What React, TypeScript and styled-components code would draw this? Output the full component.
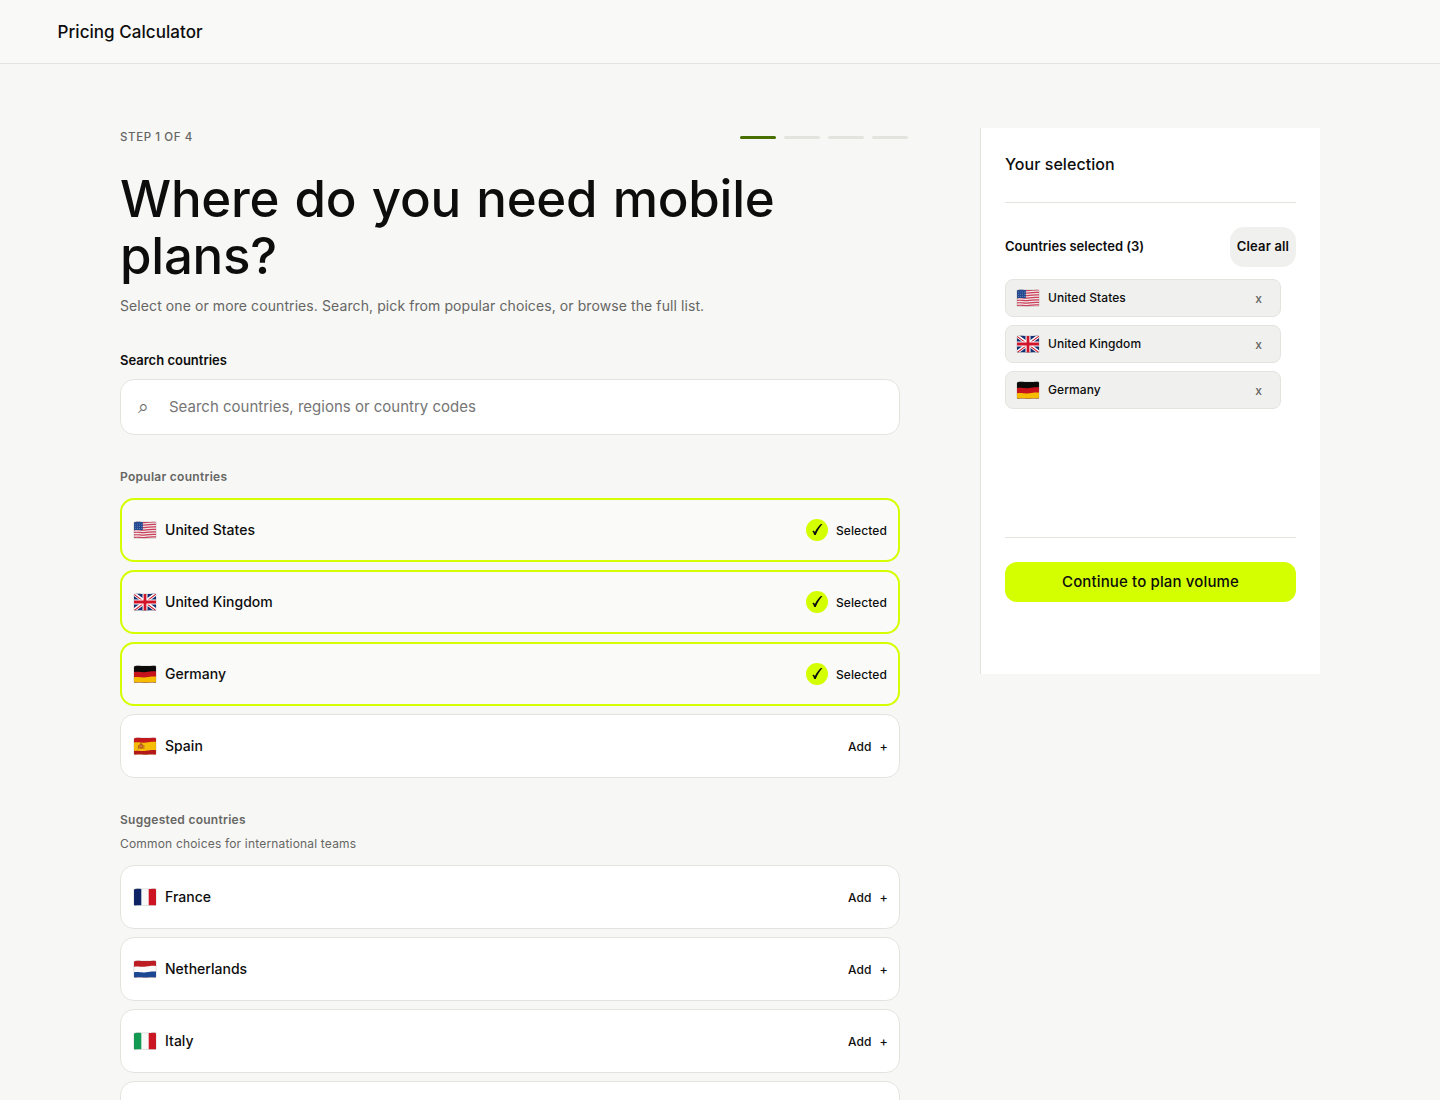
import React, { useId } from 'react';
import styled, { createGlobalStyle } from 'styled-components';

const ink = '#0d0d0d';
const muted = '#666664';
const line = '#e4e4df';
const lime = '#d4ff00';

const Global = createGlobalStyle`
  *, *::before, *::after { box-sizing: border-box; }
  html { overflow: hidden; }
  body {
    margin: 0;
    height: 1100px;
    overflow: hidden;
    background: #f7f7f5;
    color: ${ink};
    font-family: Inter, "Noto Sans", "DejaVu Sans", sans-serif;
    font-weight: 500;
  }
  h1, h2, h3, p, ul { margin: 0; padding: 0; font-weight: 500; }
  button, input { font: inherit; color: inherit; border: 0; }
`;

const Header = styled.header`
  height: 64px;
  display: flex;
  align-items: center;
  padding-left: 57.5px;
  border-bottom: 1px solid ${line};
  background: #f9f9f7;
  font-size: 17px;
  letter-spacing: 0.05px;
`;

const Main = styled.main`
  display: grid;
  grid-template-columns: 780px 340px;
  column-gap: 80px;
  align-items: start;
  padding: 64px 120px 0;
`;

const StepRow = styled.div`
  display: flex;
  align-items: center;
  justify-content: space-between;
  height: 18px;
  margin: 0 -8px 24px 0;
`;

const StepText = styled.span`
  color: ${muted};
  font-size: 11.5px;
  letter-spacing: 0.6px;
`;

const Progress = styled.div`
  display: flex;
  gap: 8px;
  margin-top: 1px;
`;

const ProgressBar = styled.span<{ $active?: boolean }>`
  width: 36px;
  height: 3px;
  border-radius: 2px;
  background: ${(p) => (p.$active ? '#477000' : line)};
`;

const Title = styled.h1`
  font-size: 51px;
  line-height: 57.2px;
  letter-spacing: -0.25px;
  word-spacing: 2px;
`;

const Intro = styled.p`
  margin-top: 10px;
  color: ${muted};
  font-size: 14px;
  font-weight: 400;
  line-height: 24px;
  letter-spacing: 0.09px;
`;

const SearchLabel = styled.label`
  display: block;
  margin-top: 32px;
  font-size: 13px;
  font-weight: 600;
  line-height: 20px;
`;

const SearchBox = styled.div`
  display: flex;
  align-items: center;
  height: 56px;
  margin-top: 9px;
  padding: 0 16px 2px 17px;
  border: 1px solid ${line};
  border-radius: 14px;
  background: #fff;
`;

const SearchGlyph = styled.span`
  width: 31px;
  color: ${muted};
  font: 400 19px/20px "DejaVu Sans", sans-serif;
`;

const SearchInput = styled.input`
  flex: 1;
  padding: 0;
  outline: none;
  background: transparent;
  font-size: 15px;
  font-weight: 400;
  &::placeholder { color: #757575; opacity: 1; }
`;

const Section = styled.section`
  margin-top: 32px;
`;

const SectionTitle = styled.h2`
  color: ${muted};
  font-size: 12px;
  font-weight: 600;
  line-height: 20px;
  letter-spacing: 0.28px;
`;

const SectionNote = styled.p`
  margin-top: 4px;
  color: ${muted};
  font-size: 12px;
  font-weight: 400;
  line-height: 20px;
  letter-spacing: 0.18px;
`;

const CountryList = styled.div`
  display: flex;
  flex-direction: column;
  gap: 8px;
  margin-top: 11px;
`;

const CountryRow = styled.button<{ $selected?: boolean }>`
  display: flex;
  align-items: center;
  height: 64px;
  padding: 0 ${(p) => (p.$selected ? 11 : 12)}px;
  border: ${(p) => (p.$selected ? `2px solid ${lime}` : `1px solid ${line}`)};
  border-radius: 14px;
  background: ${(p) => (p.$selected ? '#fafaf8' : '#fff')};
  text-align: left;
`;

const FlagImage = styled.svg`
  display: block;
  width: 24px;
  height: 18px;
`;

const CountryName = styled.span`
  flex: 1;
  margin-left: 8px;
  padding-bottom: 2px;
  font-size: 14px;
  letter-spacing: 0.02px;
`;

const Action = styled.span`
  display: flex;
  align-items: center;
  gap: 8px;
  font-size: 12px;
  letter-spacing: 0.1px;
`;

const Plus = styled.span`
  width: 7.5px;
  font-size: 12.5px;
`;

const Check = styled.span`
  width: 22px;
  height: 22px;
  border-radius: 50%;
  background: ${lime};
`;

const CheckMark = styled.svg`
  display: block;
  width: 22px;
  height: 22px;
  fill: ${ink};
`;

const Panel = styled.aside`
  display: flex;
  flex-direction: column;
  height: 546px;
  padding: 24px;
  border-left: 1px solid ${line};
  background: #fff;
`;

const PanelTitle = styled.h2`
  height: 51px;
  border-bottom: 1px solid ${line};
  font-size: 16px;
  line-height: 25px;
  letter-spacing: 0.05px;
`;

const PanelHead = styled.div`
  display: flex;
  align-items: center;
  justify-content: space-between;
  margin-top: 24px;
`;

const PanelSubtitle = styled.h3`
  padding-bottom: 2px;
  font-size: 13px;
  font-weight: 600;
  letter-spacing: -0.03px;
`;

const ClearButton = styled.button`
  width: 66px;
  height: 40px;
  padding: 0 0 2px;
  border-radius: 14px;
  background: #f0f0ee;
  font-size: 13px;
  font-weight: 600;
  letter-spacing: 0.15px;
  white-space: nowrap;
`;

const ChipList = styled.ul`
  display: flex;
  flex-direction: column;
  gap: 8px;
  width: 276px;
  margin-top: 12px;
  list-style: none;
`;

const Chip = styled.li`
  display: flex;
  align-items: center;
  height: 38px;
  padding: 0 18px 0 10px;
  border: 1px solid ${line};
  border-radius: 8px;
  background: #f0f0ee;
`;

const ChipName = styled.span`
  flex: 1;
  margin-left: 8px;
  padding-bottom: 2px;
  font-size: 12px;
  letter-spacing: 0.07px;
`;

const Remove = styled.button`
  padding: 0;
  background: none;
  color: ${muted};
  font-size: 12px;
`;

const PanelFooter = styled.div`
  margin: auto 0 48px;
  padding-top: 24px;
  border-top: 1px solid ${line};
`;

const Continue = styled.button`
  width: 100%;
  height: 40px;
  padding-bottom: 3px;
  border-radius: 12px;
  background: ${lime};
  font-size: 15px;
  letter-spacing: 0.14px;
`;

type Code = 'us' | 'gb' | 'de' | 'es' | 'fr' | 'nl' | 'it' | 'none';
type Country = { code: Code; name: string; selected?: boolean };

const popular: Country[] = [
  { code: 'us', name: 'United States', selected: true },
  { code: 'gb', name: 'United Kingdom', selected: true },
  { code: 'de', name: 'Germany', selected: true },
  { code: 'es', name: 'Spain' },
];

const suggested: Country[] = [
  { code: 'fr', name: 'France' },
  { code: 'nl', name: 'Netherlands' },
  { code: 'it', name: 'Italy' },
  { code: 'none', name: '' },
];

// A band from a rippling top edge down to the foot of the flag.
const wave = (y: number) => `M0 ${y + 0.5}C6 ${y - 0.7} 8 ${y + 1.1} 13 ${y + 0.2}S20 ${y - 0.6} 24 ${y - 0.4}V18H0Z`;

const Bands = ({ colors, stops }: { colors: string[]; stops: number[] }) => (
  <>
    <rect width="24" height="18" fill={colors[0]} />
    {stops.map((y, i) => (
      <path key={y} d={wave(y)} fill={colors[i + 1]} />
    ))}
  </>
);

const Pales = ({ left, right }: { left: string; right: string }) => (
  <>
    <rect width="24" height="18" fill="#f8f8f8" />
    <rect width="8.3" height="18" fill={left} />
    <rect x="15.7" width="8.3" height="18" fill={right} />
  </>
);

const art: Record<Code, React.ReactNode> = {
  us: (
    <>
      <rect width="24" height="18" fill="#f3e6e8" />
      {[1.2, 3.7, 6.2, 8.7, 11.2, 13.7, 16.2].map((y) => (
        <path key={y} d={`M0 ${y + 0.3}C6 ${y - 0.6} 8 ${y + 1} 13 ${y + 0.2}S20 ${y - 0.5} 24 ${y - 0.2}`} fill="none" stroke="#c9405a" strokeWidth="1.2" />
      ))}
      <path d="M0 0H9.8V9.1C7 9.3 4 8.6 0 9.4Z" fill="#234a91" />
      <g fill="#c9d5ea">
        {[3, 5.2, 7.4].map((y) =>
          [2.5, 4.5, 6.5, 8.5].map((x) => <circle key={`${x}-${y}`} cx={x} cy={y} r="0.35" />),
        )}
      </g>
    </>
  ),
  gb: (
    <>
      <rect width="24" height="18" fill="#122f73" />
      <path d="M0 0 24 18M24 0 0 18" stroke="#fff" strokeWidth="3.4" />
      <path d="M0 .6 23.5 18M24 .4 .5 18" stroke="#ce1b2b" strokeWidth="1.1" />
      <path d="M12 0V18M0 9H24" stroke="#fff" strokeWidth="5" />
      <path d="M12 0V18M0 9H24" stroke="#d0152a" strokeWidth="2.8" />
    </>
  ),
  de: <Bands colors={['#0c0a09', '#c7141c', '#f5bc00']} stops={[6.8, 12]} />,
  es: (
    <>
      <Bands colors={['#c3171d', '#f5bd08', '#b3181a']} stops={[5.2, 13.6]} />
      <rect x="6.3" y="7.1" width="3.6" height="4.6" rx="1" fill="#b9581f" />
      <path d="M5.4 8V12M10.8 8V12M7 6.3H9.2" stroke="#a24e25" strokeWidth=".8" />
      <circle cx="8.1" cy="9.2" r=".7" fill="#e6a56d" />
    </>
  ),
  fr: <Pales left="#0d2365" right="#ce1422" />,
  nl: <Bands colors={['#bd1c21', '#f9f9f9', '#1c4793']} stops={[6.4, 12]} />,
  it: <Pales left="#139a52" right="#cb1723" />,
  none: null,
};

const Flag = ({ code }: { code: Code }) => {
  const id = useId();
  return (
    <FlagImage viewBox="0 0 24 18">
      <clipPath id={id}>
        <path d="M1.6 1.2C6 .2 8 1.3 13 1.1S20 .6 22 .8Q23 .9 23 1.8V16.6Q23 17.5 22 17.5C18 17 16 17.6 12 17.5S6 17.1 2 17.6Q1 17.6 1 16.8V2Q1 1.3 1.6 1.2Z" />
      </clipPath>
      <g clipPath={`url(#${id})`}>{art[code]}</g>
      {code !== 'none' && (
        <rect x=".75" y=".75" width="22.5" height="16.8" rx="1.3" fill="none" stroke="#777" strokeOpacity=".28" strokeWidth=".7" />
      )}
    </FlagImage>
  );
};

const Countries = ({ items }: { items: Country[] }) => (
  <CountryList>
    {items.map((c) => (
      <CountryRow key={c.code} $selected={c.selected}>
        <Flag code={c.code} />
        <CountryName>{c.name}</CountryName>
        {c.name && (
          <Action>
            {c.selected ? (
              <>
                <Check>
                  <CheckMark viewBox="0 0 22 22">
                    <path d="M6.3 12.3C7.2 11.4 8.3 11.5 8.8 13.2C10.8 9.3 12.6 6.8 15 4.9H16.4C13.6 8 11.8 11.4 9.7 16H8.2C7.6 14 7 12.6 6.3 12.3Z" />
                  </CheckMark>
                </Check>
                <span>Selected</span>
              </>
            ) : (
              <>
                <span>Add</span>
                <Plus>+</Plus>
              </>
            )}
          </Action>
        )}
      </CountryRow>
    ))}
  </CountryList>
);

export default function App() {
  const chosen = popular.filter((c) => c.selected);
  return (
    <>
      <Global />
      <Header>Pricing Calculator</Header>
      <Main>
        <div>
          <StepRow>
            <StepText>STEP 1 OF 4</StepText>
            <Progress>
              <ProgressBar $active />
              <ProgressBar />
              <ProgressBar />
              <ProgressBar />
            </Progress>
          </StepRow>
          <Title>Where do you need mobile plans?</Title>
          <Intro>
            Select one or more countries. Search, pick from popular choices, or browse the full list.
          </Intro>
          <SearchLabel htmlFor="search">Search countries</SearchLabel>
          <SearchBox>
            <SearchGlyph>⌕</SearchGlyph>
            <SearchInput id="search" placeholder="Search countries, regions or country codes" />
          </SearchBox>
          <Section>
            <SectionTitle>Popular countries</SectionTitle>
            <Countries items={popular} />
          </Section>
          <Section>
            <SectionTitle>Suggested countries</SectionTitle>
            <SectionNote>Common choices for international teams</SectionNote>
            <Countries items={suggested} />
          </Section>
        </div>
        <Panel>
          <PanelTitle>Your selection</PanelTitle>
          <PanelHead>
            <PanelSubtitle>Countries selected ({chosen.length})</PanelSubtitle>
            <ClearButton>Clear all</ClearButton>
          </PanelHead>
          <ChipList>
            {chosen.map((c) => (
              <Chip key={c.code}>
                <Flag code={c.code} />
                <ChipName>{c.name}</ChipName>
                <Remove>x</Remove>
              </Chip>
            ))}
          </ChipList>
          <PanelFooter>
            <Continue>Continue to plan volume</Continue>
          </PanelFooter>
        </Panel>
      </Main>
    </>
  );
}
